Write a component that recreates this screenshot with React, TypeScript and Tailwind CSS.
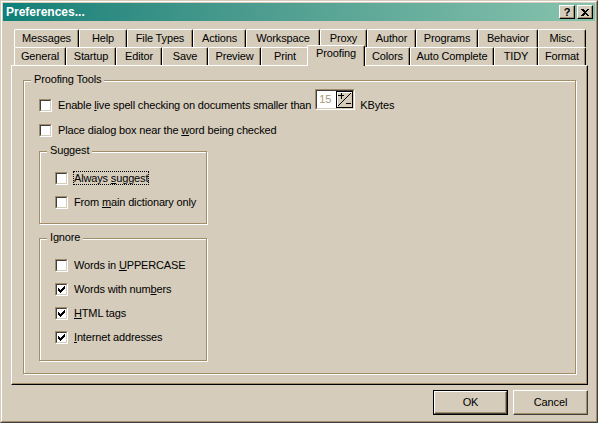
import clsx from "clsx";
import type { ReactNode } from "react";

type TabDef = { label: string; w: string; selected?: boolean };

const backRow: TabDef[] = [
  { label: "Messages", w: "w-[65px]" },
  { label: "Help", w: "w-[48px]" },
  { label: "File Types", w: "w-[66px]" },
  { label: "Actions", w: "w-[53px]" },
  { label: "Workspace", w: "w-[74px]" },
  { label: "Proxy", w: "w-[47px]" },
  { label: "Author", w: "w-[49px]" },
  { label: "Programs", w: "w-[62px]" },
  { label: "Behavior", w: "w-[60px]" },
  { label: "Misc.", w: "w-[48px]" },
];

const frontRow: TabDef[] = [
  { label: "General", w: "w-[52px]" },
  { label: "Startup", w: "w-[50px]" },
  { label: "Editor", w: "w-[46px]" },
  { label: "Save", w: "w-[46px]" },
  { label: "Preview", w: "w-[53px]" },
  { label: "Print", w: "w-[48px]" },
  { label: "Proofing", w: "w-[58px]", selected: true },
  { label: "Colors", w: "w-[45px]" },
  { label: "Auto Complete", w: "w-[84px]" },
  { label: "TIDY", w: "w-[44px]" },
  { label: "Format", w: "w-[48px]" },
];

// classic 7x7 check mark, one 3px column per x
const checkCols = [2, 3, 4, 3, 2, 1, 0];

function CheckBox({ checked }: { checked?: boolean }) {
  return (
    <span className="flex h-[13px] w-[13px] shrink-0 border border-t-[#a28d68] border-l-[#a28d68] border-r-white border-b-white">
      <span className="flex flex-1 border border-t-[#404040] border-l-[#404040] border-r-[#d5ccbb] border-b-[#d5ccbb] bg-white">
        {checked && (
          <svg width="9" height="9" viewBox="0 0 9 9" shapeRendering="crispEdges">
            {checkCols.map((top, i) => (
              <rect key={i} x={1 + i} y={1 + top} width="1" height="3" fill="#000" />
            ))}
          </svg>
        )}
      </span>
    </span>
  );
}

function Row({
  checked,
  focus,
  children,
}: {
  checked?: boolean;
  focus?: boolean;
  children: ReactNode;
}) {
  return (
    <div className="flex items-center">
      <CheckBox checked={checked} />
      {focus ? (
        <span className="ml-[5px] border border-dotted border-black leading-[12px]">{children}</span>
      ) : (
        <span className="ml-[6px] leading-[13px]">{children}</span>
      )}
    </div>
  );
}

function GroupBox({
  title,
  className,
  children,
}: {
  title: string;
  className?: string;
  children: ReactNode;
}) {
  return (
    <div
      className={clsx(
        "relative border border-[#a28d68] shadow-[inset_1px_1px_0_#fff,1px_1px_0_#fff]",
        className,
      )}
    >
      <span className="absolute -top-[8px] left-[7px] bg-[#d5ccbb] px-[3px] leading-[13px]">{title}</span>
      {children}
    </div>
  );
}

function Tab({ tab }: { tab: TabDef }) {
  return (
    <div
      className={clsx(
        "flex justify-center rounded-t-[2px] border-t border-l border-r border-t-white border-l-white border-r-black bg-[#d5ccbb] shadow-[inset_-1px_0_0_#a28d68]",
        tab.w,
        tab.selected
          ? "relative z-10 -mb-[1px] -ml-[2px] h-[21px] items-start pt-[1px]"
          : "h-[18px] items-center",
      )}
    >
      <span className="leading-[13px]">{tab.label}</span>
    </div>
  );
}

function SpinBox() {
  return (
    <div className="mb-[2px] ml-[4px] flex h-[21px] w-[40px] border border-t-[#a28d68] border-l-[#a28d68] border-r-white border-b-white">
      <div className="flex flex-1 border border-t-[#404040] border-l-[#404040] border-r-[#d5ccbb] border-b-[#d5ccbb]">
        <div className="flex w-[19px] items-center bg-white pl-[2px] text-[#a89878]">15</div>
        <svg width="17" height="17" viewBox="0 0 17 17" shapeRendering="crispEdges">
          <rect x="0" y="0" width="17" height="17" fill="#d5ccbb" />
          <rect x="0.5" y="0.5" width="16" height="16" fill="none" stroke="#000" />
          <path d="M1.5 15.5V1.5H15.5" fill="none" stroke="#fff" />
          <path d="M2 15L15 2" stroke="#000" shapeRendering="auto" />
          <path d="M2 4.5H8M5 1.5V7.5" stroke="#000" />
          <path d="M9.5 12.5H15" stroke="#000" />
        </svg>
      </div>
    </div>
  );
}

function TitleButton({ children }: { children: ReactNode }) {
  return (
    <div className="flex h-[14px] w-[16px] items-center justify-center border border-t-white border-l-white border-r-black border-b-black bg-[#d5ccbb] shadow-[inset_-1px_-1px_0_#a28d68] text-[11px] font-bold leading-none text-black">
      {children}
    </div>
  );
}

export default function App() {
  return (
    <div className="h-[423px] w-[598px] border border-t-[#d5ccbb] border-l-[#d5ccbb] border-r-[#404040] border-b-[#404040] bg-[#d5ccbb] font-['Liberation_Sans',Arial,sans-serif] text-[11px] tracking-[-0.15px] text-black">
      <div className="flex h-full flex-col border border-t-white border-l-white border-r-[#a28d68] border-b-[#a28d68] p-[1px]">
        {/* title bar */}
        <div className="flex h-[18px] shrink-0 items-center justify-between bg-linear-to-r from-[#0b8079] to-[#86c3ad] pl-[3px] pr-[2px]">
          <span className="text-[12px] font-bold tracking-normal text-white">Preferences...</span>
          <div className="flex gap-[2px]">
            <TitleButton>?</TitleButton>
            <TitleButton>
              <svg width="8" height="7" viewBox="0 0 8 7" shapeRendering="crispEdges">
                <path d="M0 0h2l2 2 2-2h2L5 3.5 8 7H6L4 5 2 7H0l3-3.5z" fill="#000" />
              </svg>
            </TitleButton>
          </div>
        </div>

        <div className="flex flex-col pl-[8px] pr-[7px] pt-[8px]">
          {/* tabs */}
          <div className="ml-[3px] flex">
            {backRow.map((t) => (
              <Tab key={t.label} tab={t} />
            ))}
          </div>
          <div className="ml-[3px] flex h-[18px] items-end">
            {frontRow.map((t) => (
              <Tab key={t.label} tab={t} />
            ))}
          </div>

          {/* page */}
          <div className="flex h-[320px] flex-col border border-t-white border-l-white border-r-black border-b-black pb-[10px] pl-[11px] pr-[11px] pt-[14px] shadow-[inset_-1px_-1px_0_#a28d68]">
            <GroupBox title="Proofing Tools" className="flex flex-1 flex-col pl-[15px]">
              <div className="mt-[8px] flex items-end">
                <Row>
                  Enable <span className="underline">l</span>ive spell checking on documents smaller than
                </Row>
                <SpinBox />
                <span className="ml-[5px] leading-[13px]">KBytes</span>
              </div>
              <div className="mt-[12px]">
                <Row>
                  Place dialog box near the <span className="underline">w</span>ord being checked
                </Row>
              </div>

              <GroupBox title="Suggest" className="mt-[14px] flex h-[73px] w-[168px] flex-col gap-[11px] pl-[15px] pt-[19px]">
                <Row focus>
                  Always <span className="underline">s</span>uggest
                </Row>
                <Row>
                  From <span className="underline">m</span>ain dictionary only
                </Row>
              </GroupBox>

              <GroupBox title="Ignore" className="mt-[14px] flex h-[123px] w-[168px] flex-col gap-[11px] pl-[15px] pt-[20px]">
                <Row>
                  Words in <span className="underline">U</span>PPERCASE
                </Row>
                <Row checked>
                  Words with num<span className="underline">b</span>ers
                </Row>
                <Row checked>
                  <span className="underline">H</span>TML tags
                </Row>
                <Row checked>
                  <span className="underline">I</span>nternet addresses
                </Row>
              </GroupBox>
            </GroupBox>
          </div>

          {/* buttons */}
          <div className="mt-[5px] flex justify-end gap-[5px]">
            <div className="flex h-[25px] w-[75px] border border-black">
              <div className="flex flex-1 items-center justify-center border border-t-white border-l-white border-r-[#404040] border-b-[#404040] shadow-[inset_-1px_-1px_0_#a28d68]">
                OK
              </div>
            </div>
            <div className="flex h-[25px] w-[75px] items-center justify-center border border-t-white border-l-white border-r-[#404040] border-b-[#404040] shadow-[inset_-1px_-1px_0_#a28d68]">
              Cancel
            </div>
          </div>
        </div>
      </div>
    </div>
  );
}
